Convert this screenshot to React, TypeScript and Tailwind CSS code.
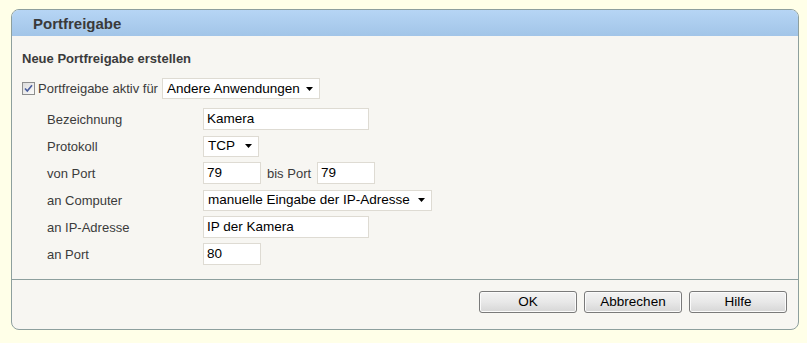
import React from "react";

const Arrow = () => (
  <svg width="7" height="4" viewBox="0 0 7 4" className="shrink-0">
    <path d="M0 0H7L3.5 4Z" fill="#000" />
  </svg>
);

function Select({ value, width }: { value: string; width: string }) {
  return (
    <div
      className={`${width} h-[21px] bg-white border border-[#dedbd3] flex items-center justify-between pl-[4px] pr-[6px] text-[13.5px] text-black leading-none`}
    >
      <span>{value}</span>
      <Arrow />
    </div>
  );
}

function Input({ value, width }: { value: string; width: string }) {
  return (
    <div
      className={`${width} h-[22px] bg-white border border-[#dedbd3] flex items-center pl-[3px] text-[13.5px] text-black leading-none`}
    >
      {value}
    </div>
  );
}

function Row({ label, children }: { label: string; children: React.ReactNode }) {
  return (
    <div className="flex items-center h-[22px]">
      <div className="w-[156px] text-[13px] text-[#3b3b3b] leading-none">{label}</div>
      <div className="flex items-center">{children}</div>
    </div>
  );
}

function Button({ label }: { label: string }) {
  return (
    <div className="w-[98px] h-[22px] rounded-[3px] border border-[#7a7a7a] bg-gradient-to-b from-[#f3f3f3] via-[#e8e8e8] to-[#d6d6d6] flex items-center justify-center text-[13.5px] text-black leading-none shadow-[inset_0_0_0_1px_#fbfbfb]">
      {label}
    </div>
  );
}

export default function App() {
  return (
    <div
      className="w-[807px] h-[343px] bg-[#ffffe8] pt-[9px] pl-[11px]"
      style={{ fontFamily: '"Liberation Sans", Arial, sans-serif' }}
    >
      <div className="w-[788px] h-[321px] rounded-[8px] border border-[#8d9f9e] bg-[#f7f6f2] overflow-hidden flex flex-col">
        <div className="h-[26px] bg-gradient-to-b from-[#b6d5f5] to-[#a2c5e8] flex items-center pl-[21px] shrink-0">
          <span className="text-[15px] font-bold text-[#3a3a3a] leading-none">Portfreigabe</span>
        </div>
        <div className="pl-[10px] pt-[16px] flex flex-col">
          <div className="text-[13px] font-bold text-[#3b3b3b] leading-none h-[14px]">
            Neue Portfreigabe erstellen
          </div>
          <div className="flex items-center mt-[12px] h-[21px]">
            <div className="w-[13px] h-[13px] border border-[#8e8f8f] bg-gradient-to-br from-[#dcdcdc] to-[#fbfbfb] flex items-center justify-center">
              <svg width="9" height="9" viewBox="0 0 9 9">
                <path d="M1 4.5L3.3 7L8 1.2" fill="none" stroke="#4a5e9e" strokeWidth="1.6" />
              </svg>
            </div>
            <span className="ml-[3px] text-[13px] text-[#3b3b3b] leading-none">Portfreigabe aktiv für</span>
            <div className="ml-[4px]">
              <Select value="Andere Anwendungen" width="w-[158px]" />
            </div>
          </div>
          <div className="flex flex-col gap-[5px] mt-[9px] pl-[25px]">
            <Row label="Bezeichnung">
              <Input value="Kamera" width="w-[166px]" />
            </Row>
            <Row label="Protokoll">
              <Select value="TCP" width="w-[56px]" />
            </Row>
            <Row label="von Port">
              <Input value="79" width="w-[58px]" />
              <span className="mx-[6px] text-[13px] text-[#3b3b3b] leading-none">bis Port</span>
              <Input value="79" width="w-[58px]" />
            </Row>
            <Row label="an Computer">
              <Select value="manuelle Eingabe der IP-Adresse" width="w-[229px]" />
            </Row>
            <Row label="an IP-Adresse">
              <Input value="IP der Kamera" width="w-[166px]" />
            </Row>
            <Row label="an Port">
              <Input value="80" width="w-[58px]" />
            </Row>
          </div>
        </div>
        <div className="mt-[14px] border-t border-[#8d9f9e]" />
        <div className="flex justify-end gap-[7px] pr-[11px] pt-[11px]">
          <Button label="OK" />
          <Button label="Abbrechen" />
          <Button label="Hilfe" />
        </div>
      </div>
    </div>
  );
}
